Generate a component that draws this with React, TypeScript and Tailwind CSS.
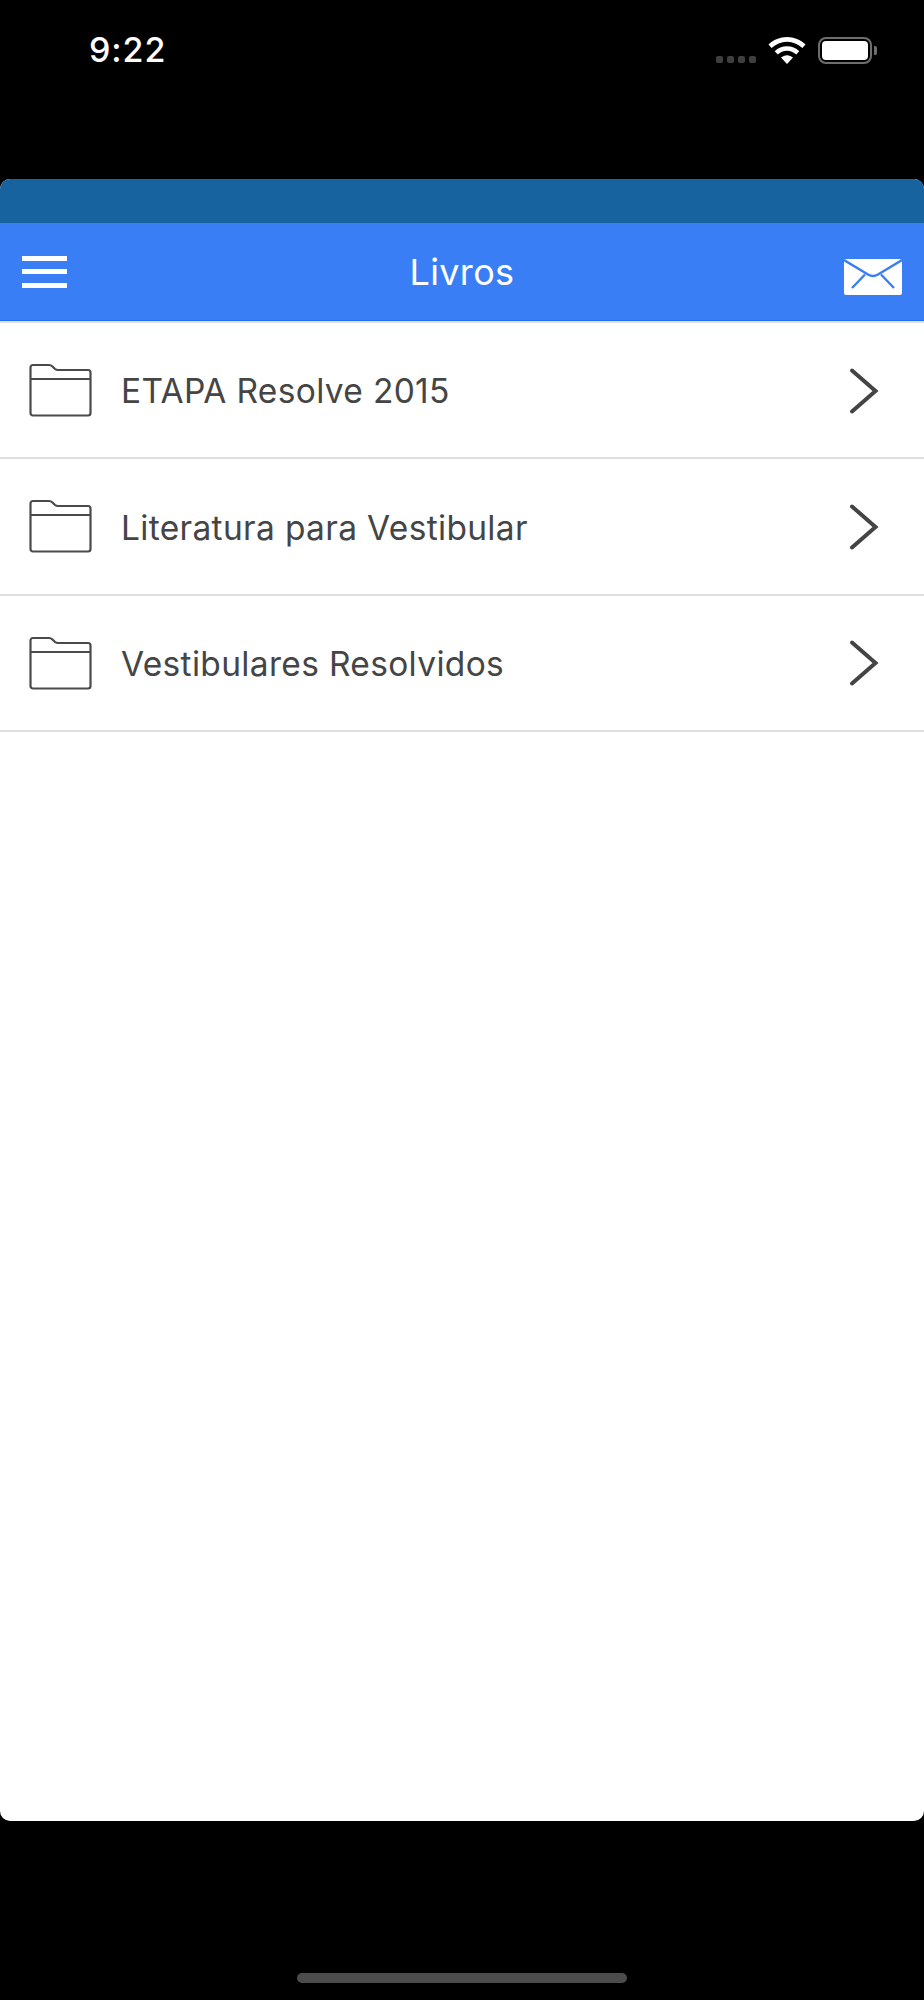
const FONT = "font-['Inter','Noto_Sans',sans-serif]";

function Folder() {
  return (
    <svg width="64" height="56" viewBox="0 0 64 56" fill="none" stroke="#4a4a4a" strokeWidth="2.2" className="shrink-0">
      <path d="M2.5 51V5.5C2.5 4 3.5 3 5 3H21C22.5 3 23.5 3.5 24.5 4.5L27 7C28 7.8 29 8 30.5 8H60C61.5 8 62.5 9 62.5 10.5V51C62.5 52.5 61.5 53.5 60 53.5H5C3.5 53.5 2.5 52.5 2.5 51Z" strokeLinejoin="round" />
      <path d="M2.5 17H62.5" />
    </svg>
  );
}

function Chevron() {
  return (
    <svg width="30" height="48" viewBox="0 0 30 48" fill="none" stroke="#444444" strokeWidth="4" strokeLinecap="round" strokeLinejoin="miter" className="mt-[1px] shrink-0">
      <path d="M3 3.5L26.5 24L3 44.5" />
    </svg>
  );
}

function Row({ label }: { label: string }) {
  return (
    <div className="flex h-[136.3px] items-center border-b-2 border-[#dedede] pl-[28px] pr-[45px]">
      <Folder />
      <span className="ml-[29px] flex-1 pt-[4px] text-[33.5px] leading-none tracking-[0.33px] text-[#454545]">{label}</span>
      <Chevron />
    </div>
  );
}

export default function App() {
  return (
    <div className={`${FONT} flex h-[2000px] w-[924px] flex-col overflow-hidden bg-black`}>
      <div className="flex h-[179px] items-start justify-between pl-[89px] pr-[47px] pt-[28px]">
        <span className="text-[34px] font-medium leading-[44px] tracking-[0.9px] text-white">9:22</span>
        <div className="mt-[9px] flex items-end">
          <div className="mb-[1px] flex gap-[4px]">
            <span className="h-[7px] w-[7px] rounded-[2px] bg-[#3f3f3f]" />
            <span className="h-[7px] w-[7px] rounded-[2px] bg-[#3f3f3f]" />
            <span className="h-[7px] w-[7px] rounded-[2px] bg-[#3f3f3f]" />
            <span className="h-[7px] w-[7px] rounded-[2px] bg-[#3f3f3f]" />
          </div>
          <svg width="38" height="27" viewBox="0 0 38 27" fill="white" className="ml-[12px]">
            <path d="M19 0C26 0 32.5 2.8 37.5 7.5L34.4 11C30.2 7 24.9 4.7 19 4.7S7.8 7 3.6 11L.5 7.5C5.5 2.8 12 0 19 0Z" />
            <path d="M19 9.2C23.7 9.2 28 11 31.3 14.2L28.2 17.6C25.7 15.2 22.5 13.8 19 13.8S12.3 15.2 9.8 17.6L6.7 14.2C10 11 14.3 9.2 19 9.2Z" />
            <path d="M19 18.2C21.2 18.2 23.3 19.1 25 20.6L19 27L13 20.6C14.7 19.1 16.8 18.2 19 18.2Z" />
          </svg>
          <div className="ml-[12px] flex items-center">
            <div className="h-[27px] w-[54px] rounded-[8px] border-2 border-[#6e6e6e] p-[2px]">
              <div className="h-full w-full rounded-[4px] bg-white" />
            </div>
            <div className="ml-[2px] h-[9px] w-[3px] rounded-r-[2px] bg-[#6e6e6e]" />
          </div>
        </div>
      </div>

      <div className="flex h-[1642px] flex-col overflow-hidden rounded-[10px] bg-white">
        <div className="h-[44px] bg-[#17639f]" />
        <div className="grid h-[97px] grid-cols-[1fr_auto_1fr] items-center bg-[#3a7ef5] pl-[22px] pr-[22px]">
          <div className="flex h-[32px] w-[45px] flex-col justify-between">
            <span className="h-[5px] bg-white" />
            <span className="h-[5px] bg-white" />
            <span className="h-[5px] bg-white" />
          </div>
          <span className="text-[36px] leading-none tracking-[0.35px] text-white">Livros</span>
          <svg width="58" height="36" viewBox="0 0 58 36" className="mt-[10px] justify-self-end">
            <rect width="58" height="36" rx="2" fill="white" />
            <path d="M0 1L24 15.5C27 17.3 31 17.3 34 15.5L58 1M8 29L21 15.5M50 29L37 15.5" fill="none" stroke="#3a7ef5" strokeWidth="2.4" />
          </svg>
        </div>
        <div className="h-[1px] bg-[#1e6ff0]" />
        <div className="h-[2px] bg-[#e3dfd8]" />
        <Row label="ETAPA Resolve 2015" />
        <Row label="Literatura para Vestibular" />
        <Row label="Vestibulares Resolvidos" />
      </div>

      <div className="flex flex-1 justify-center pt-[152px]">
        <div className="h-[10px] w-[330px] rounded-full bg-[#4c4c4c]" />
      </div>
    </div>
  );
}
